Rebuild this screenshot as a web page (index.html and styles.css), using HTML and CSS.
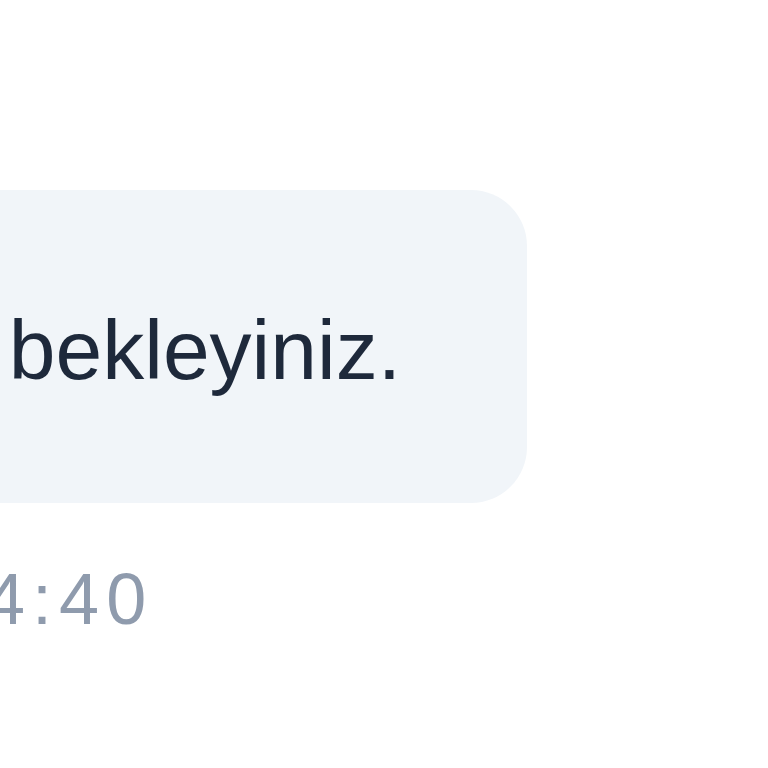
FILE: index.html
```html
<!DOCTYPE html>
<html lang="tr">
<head>
<meta charset="utf-8">
<title>Mesaj</title>
<link rel="stylesheet" href="styles.css">
</head>
<body>
  <div class="thread">
    <div class="message">
      <div class="bubble">Lütfen bekleyiniz.</div>
      <div class="time">14:40</div>
    </div>
  </div>
</body>
</html>
```
FILE: styles.css
```css
html, body {
  margin: 0;
  padding: 0;
  background: #ffffff;
  overflow: hidden;
  width: 768px;
  height: 768px;
}
.thread {
  padding-top: 190px;
  display: flex;
  flex-direction: column;
  align-items: flex-start;
}
.message {
  display: flex;
  flex-direction: column;
  align-items: flex-start;
  gap: 48px;
  margin-left: -40px;
}
.bubble {
  box-sizing: border-box;
  width: 567px;
  background: #f1f5f9;
  color: #1e293b;
  font-family: "Liberation Sans", Arial, sans-serif;
  font-size: 84px;
  line-height: 120px;
  padding: 100px 0 93px 0;
  border-radius: 0 56px 56px 0;
  white-space: nowrap;
  display: flex;
  justify-content: flex-end;
  padding-right: 126px;
}
.time {
  color: #8f9bad;
  font-family: "Liberation Sans", Arial, sans-serif;
  font-size: 72px;
  line-height: 96px;
  letter-spacing: 7px;
  margin-left: -22px;
}
```
